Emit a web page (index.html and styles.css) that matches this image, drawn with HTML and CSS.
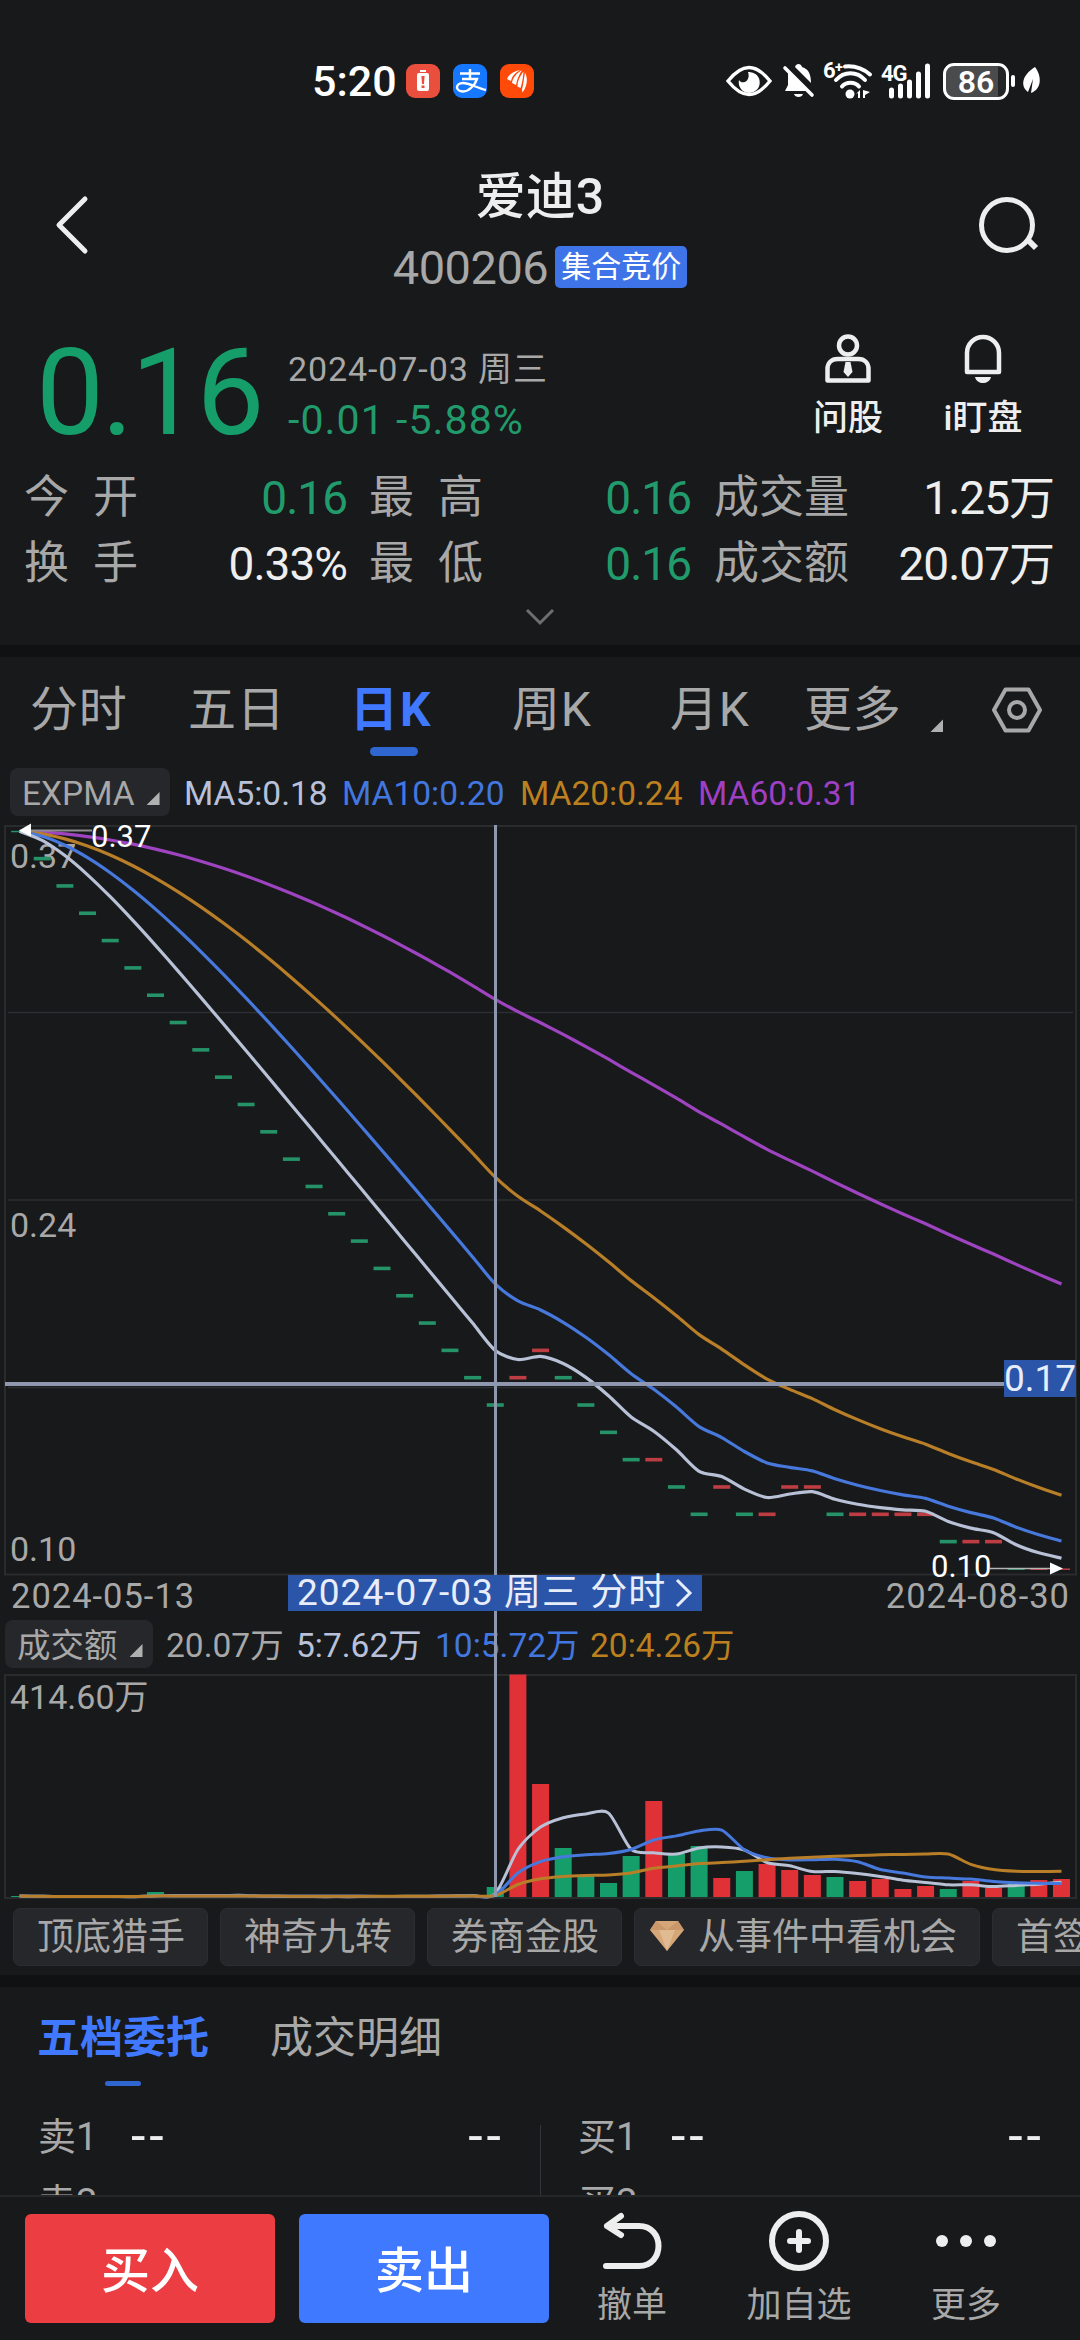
FILE: index.html
```html
<!DOCTYPE html>
<html lang="zh-CN">
<head>
    <meta charset="UTF-8">
    <title>爱迪3 400206</title>
    <link rel="stylesheet" href="styles.css">
</head>
<body>
    <div class="page">
        <div class="status-bar">
            <div class="status-left">
                <span class="clock">5:20</span>
                <svg class="app-icon" viewBox="0 0 34 34">
                    <rect width="34" height="34" rx="9" fill="#ea4e3c"/>
                    <rect x="11" y="9" width="12" height="18" rx="2" fill="#fff"/>
                    <rect x="14" y="6" width="6" height="2" fill="#fff"/>
                    <path d="M15.4 12h3.2l-.6 8h-2zM15.5 21.5h3v2.5h-3z" fill="#ea4e3c"/>
                </svg>
                <svg class="app-icon" viewBox="0 0 34 34">
                    <rect width="34" height="34" rx="9" fill="#1677ff"/>
                    <path d="M7 9.5h20M17 5v10M9 15h15c-2 6-8 12.500-14 12.500-8 0-8-8.500 0-8.500 6 0 14 5 23 7" fill="none" stroke="#fff" stroke-width="2.400"/>
                </svg>
                <svg class="app-icon" viewBox="0 0 34 34">
                    <rect width="34" height="34" rx="9" fill="#ff4a0a"/>
                    <path d="M7 15c2-5 7-8 13-9-5 3-8 6-9 11zM12 19c1-6 5-10 10-13-3 5-5 9-6 15zM17.500 22.500c0-6 3-11 6-15-.5 5-1 11-3 16.500zM22 25.500c1.500-6 2-11 3-17 3 6 2.500 13-2.500 20z" fill="#fff"/>
                </svg>
            </div>
            <div class="status-right">
                <svg class="eye" width="46" height="32" viewBox="0 0 46 32">
                    <path d="M2 16C10 6 16 2.500 23 2.500S36 6 44 16c-8 10-14 13.500-21 13.500S10 26 2 16z" fill="none" stroke="#fff" stroke-width="3.400"/>
                    <path d="M22 7a10.500 10.500 0 1 1-9 8c1.500 3 6 3 8 .5S23 10 22 7z" fill="#fff"/>
                </svg>
                <svg class="mute" width="32" height="36" viewBox="0 0 32 36">
                    <path d="M12 4c1-4 6-4 7 0 7 2 9 8 9 16L12 4zM5 9l20 19H2l3-6z" fill="#fff"/>
                    <path d="M2 5l27 27" stroke="#fff" stroke-width="3.600" stroke-linecap="round"/>
                    <path d="M11 31h9c-1 4-8 4-9 0z" fill="#fff"/>
                </svg>
                <svg class="wifi" width="50" height="38" viewBox="0 0 50 38">
                    <text x="0" y="16" class="tiny-label">6⁺</text>
                    <g fill="none" stroke="#fff" stroke-width="4" stroke-linecap="round">
                        <path d="M22 4.500c10-1 18 2 25 8"/>
                        <path d="M13 18c8-9 21-9 29 0"/>
                        <path d="M19 24.500c4-5 13-5 17 0"/>
                    </g>
                    <circle cx="27" cy="32" r="4.500" fill="#fff"/>
                    <path d="M33 32l4-4v8h-2v-5zM40 28v8h2v-3l5-3z" fill="#fff"/>
                </svg>
                <svg class="signal" width="51" height="38" viewBox="0 0 51 38">
                    <text x="0" y="19" class="tiny-label">4G</text>
                    <g stroke="#fff" stroke-width="5" stroke-linecap="round">
                        <path d="M10.500 28v6M19.500 24v10M28.500 20v14M37.500 12v22M46.500 4v30"/>
                    </g>
                </svg>
                <div class="battery">86</div>
                <div class="battery-nub"></div>
                <svg class="leaf" width="20" height="30" viewBox="0 0 20 30">
                    <path d="M13 1c7 9 7 22-4 26l2-14-5 13C-2 20 0 9 13 1z" fill="#fff"/>
                </svg>
            </div>
        </div>

        <header class="header">
            <svg class="back" width="36" height="60" viewBox="0 0 36 60">
                <path d="M31 4L5 30l26 26" fill="none" stroke="#eee" stroke-width="5" stroke-linecap="round" stroke-linejoin="round"/>
            </svg>
            <div class="title">
                <h1>爱迪3</h1>
                <div class="code"><span>400206</span><em>集合竞价</em></div>
            </div>
            <svg class="search" width="62" height="58" viewBox="0 0 62 58">
                <circle cx="29" cy="29" r="25.500" fill="none" stroke="#eee" stroke-width="5"/>
                <path d="M49 43l9 9" stroke="#eee" stroke-width="6"/>
            </svg>
        </header>

        <section class="quote">
            <div class="price">0.16</div>
            <div class="change">
                <div class="date">2024-07-03 周三</div>
                <div class="diff">-0.01 -5.88%</div>
            </div>
            <div class="tool ask">
                <svg width="48" height="50" viewBox="0 0 48 50" fill="none" stroke="#eee" stroke-width="4.500">
                    <circle cx="24" cy="11.500" r="9"/>
                    <path d="M3.500 46.500V35c0-6 4-10 10-10h21c6 0 10 4 10 10v11.500z" stroke-linejoin="round"/>
                    <path d="M21.500 28h5l2 10-4.500 5-4.500-5z" fill="#eee" stroke="none"/>
                </svg>
                <span>问股</span>
            </div>
            <div class="tool watch">
                <svg width="40" height="50" viewBox="0 0 40 50">
                    <path d="M4 38V19a16 16 0 0 1 32 0v19z" fill="none" stroke="#eee" stroke-width="4.500" stroke-linejoin="round"/>
                    <path d="M12 43h16c-2 8-14 8-16 0z" fill="#eee"/>
                </svg>
                <span>i盯盘</span>
            </div>
        </section>

        <section class="stats">
            <label class="wide">今开</label><b class="down">0.16</b>
            <label class="wide">最高</label><b class="down">0.16</b>
            <label>成交量</label><b>1.25万</b>
            <label class="wide">换手</label><b>0.33%</b>
            <label class="wide">最低</label><b class="down">0.16</b>
            <label>成交额</label><b>20.07万</b>
        </section>
        <div class="expand">
            <svg width="30" height="18" viewBox="0 0 30 18"><path d="M2 2l13 13L28 2" fill="none" stroke="#6d6e70" stroke-width="3"/></svg>
        </div>
        <div class="divider"></div>

        <nav class="periods">
            <span>分时</span>
            <span>五日</span>
            <span class="active">日K</span>
            <span>周K</span>
            <span>月K</span>
            <span class="more">更多<i class="corner"></i></span>
            <svg class="settings" width="52" height="48" viewBox="0 0 52 48" fill="none" stroke="#a8a8a8" stroke-width="4">
                <path d="M14.500 3.500h23L49 24 37.500 44.500h-23L3 24z" stroke-linejoin="round"/>
                <circle cx="26" cy="24" r="8"/>
            </svg>
        </nav>

        <div class="legend">
            <span class="select">EXPMA<i class="corner"></i></span>
            <span class="ma5">MA5:0.18</span>
            <span class="ma10">MA10:0.20</span>
            <span class="ma20">MA20:0.24</span>
            <span class="ma60">MA60:0.31</span>
        </div>

        <section class="charts">
            <svg id="priceChart" width="1080" height="750" viewBox="0 0 1080 750"></svg>
            <div class="date-axis">
                <span>2024-05-13</span>
                <span>2024-08-30</span>
            </div>
            <div class="legend volume-legend">
                <span class="select">成交额<i class="corner"></i></span>
                <span class="vol">20.07万</span>
                <span class="ma5">5:7.62万</span>
                <span class="ma10">10:5.72万</span>
                <span class="ma20">20:4.26万</span>
            </div>
            <svg id="volumeChart" width="1080" height="225" viewBox="0 0 1080 225"></svg>

            <div class="cross-h"></div>
            <div class="cross-v"></div>
            <div class="cross-price">0.17</div>
            <div class="cross-date">2024-07-03 周三 分时
                <svg width="18" height="32" viewBox="0 0 18 32"><path d="M2 3l13 13L2 29" fill="none" stroke="#e8edfa" stroke-width="3"/></svg>
            </div>
        </section>

        <div class="chips">
            <span>顶底猎手</span>
            <span>神奇九转</span>
            <span>券商金股</span>
            <span class="gem">
                <svg width="36" height="32" viewBox="0 0 36 32">
                    <path d="M7 1h22l6 9-17 21L1 10z" fill="#d5a677"/>
                    <path d="M1 10l6-9 11 9zM35 10L29 1 18 10z" fill="#c9976a"/>
                    <path d="M10 10h16l-8 21z" fill="#e0ba90"/>
                </svg>从事件中看机会
            </span>
            <span>首签</span>
        </div>
        <div class="divider"></div>

        <section class="orders">
            <div class="order-tabs">
                <span class="active">五档委托</span>
                <span>成交明细</span>
            </div>
            <div class="book">
                <div class="side">
                    <div class="level"><label>卖1</label><b>--</b><b>--</b></div>
                    <div class="level"><label>卖2</label></div>
                </div>
                <div class="side">
                    <div class="level"><label>买1</label><b>--</b><b>--</b></div>
                    <div class="level"><label>买2</label></div>
                </div>
            </div>
        </section>

        <footer class="actions">
            <button class="buy">买入</button>
            <button class="sell">卖出</button>
            <div class="action undo">
                <svg width="60" height="62" viewBox="0 0 60 62" fill="none" stroke="#eee" stroke-width="6" stroke-linecap="round" stroke-linejoin="round">
                    <path d="M19 6L5 16l14 9M5 16h32c26 0 26 40 0 40H4"/>
                </svg>
                <span>撤单</span>
            </div>
            <div class="action add">
                <svg width="62" height="62" viewBox="0 0 62 62" fill="none" stroke="#eee" stroke-width="6">
                    <circle cx="31" cy="31" r="27"/>
                    <path d="M31 22v18M22 31h18" stroke-linecap="round"/>
                </svg>
                <span>加自选</span>
            </div>
            <div class="action dots">
                <svg width="62" height="62" viewBox="0 0 62 62" fill="#eee">
                    <circle cx="7" cy="31" r="6"/><circle cx="31" cy="31" r="6"/><circle cx="55" cy="31" r="6"/>
                </svg>
                <span>更多</span>
            </div>
        </footer>
    </div>
    <script src="chart.js"></script>
</body>
</html>
```
FILE: styles.css
```css
* {
    margin: 0;
    padding: 0;
    box-sizing: border-box;
}

body {
    width: 1080px;
    height: 2340px;
    overflow: hidden;
    background: #17191b;
    color: #eee;
    font-family: Roboto, 'Noto Sans CJK SC', sans-serif;
}

svg {
    display: block;
    flex: none;
    overflow: visible;
}

.page {
    width: 1080px;
    height: 2340px;
    display: flex;
    flex-direction: column;
    overflow: hidden;
    white-space: nowrap;
}

.page > * {
    flex: none;
}

/* Status bar */
.status-bar {
    height: 130px;
    padding: 32px 38px 0 312px;
    display: flex;
    justify-content: space-between;
    color: #fff;
}

.status-left,
.status-right {
    height: 98px;
    display: flex;
    align-items: center;
}

.clock {
    width: 94px;
    font-size: 43px;
    font-weight: 500;
    line-height: 52px;
}

.app-icon {
    width: 34px;
    height: 34px;
    margin-right: 13px;
}

.eye {
    margin-right: 11px;
}

.mute {
    margin-right: 8px;
}

.wifi {
    margin-right: 8px;
}

.signal {
    margin-right: 11px;
}

.tiny-label {
    font-size: 22px;
    font-weight: 700;
    fill: #fff;
    letter-spacing: -1px;
}

.battery {
    width: 66px;
    height: 37px;
    border: 3px solid #fff;
    border-radius: 11px;
    background: linear-gradient(90deg, #4a4b4d 86%, #232527 86%);
    font-size: 32px;
    font-weight: 600;
    line-height: 32px;
    text-align: center;
}

.battery-nub {
    width: 4px;
    height: 12px;
    margin: 0 7px 0 2px;
    border-radius: 2px;
    background: #fff;
}

/* Header */
.header {
    height: 190px;
    padding: 35px 40px 0 54px;
    display: flex;
    justify-content: space-between;
}

.back {
    margin-top: 30px;
}

.search {
    margin-top: 31px;
}

.title {
    display: flex;
    flex-direction: column;
    align-items: center;
    margin-left: 12px;
}

.title h1 {
    font-size: 50px;
    font-weight: 500;
    line-height: 65px;
}

.code {
    height: 42px;
    margin-top: 16px;
    display: flex;
    align-items: center;
    gap: 7px;
    color: #a8a8a8;
    font-size: 47px;
    letter-spacing: -0.5px;
}

.code em {
    height: 42px;
    padding: 0 6px;
    border-radius: 5px;
    background: #3f74e8;
    color: #fff;
    font-size: 30px;
    font-style: normal;
    line-height: 41px;
    letter-spacing: 0;
}

/* Quote */
.quote {
    height: 145px;
    padding-left: 35px;
    display: flex;
}

.price {
    width: 253px;
    padding-left: 1px;
    color: #159e6a;
    font-size: 121px;
    line-height: 146px;
    letter-spacing: -2.5px;
}

.change {
    width: 518px;
    padding-top: 26px;
    color: #a8a8a8;
}

.date {
    height: 46px;
    font-size: 34px;
    line-height: 47px;
    letter-spacing: 0.9px;
}

.diff {
    height: 52px;
    color: #229b6c;
    font-size: 41px;
    line-height: 56px;
    letter-spacing: 1.1px;
}

.tool {
    padding-top: 14px;
    display: flex;
    flex-direction: column;
    align-items: center;
    font-size: 35px;
    font-weight: 500;
}

.tool.ask {
    width: 84px;
    margin-right: 43px;
}

.tool.watch {
    width: 100px;
}

.tool span {
    margin-top: 10px;
    line-height: 50px;
}

/* Stats */
.stats {
    height: 132px;
    padding: 0 26px 0 24px;
    display: grid;
    grid-template-columns: 114px 209px 22px 113px 209px 23px 135px 1fr;
    grid-template-rows: 66px 66px;
    align-items: center;
    font-size: 45px;
    line-height: 66px;
}

.stats label {
    color: #a8a8a8;
}

.stats .wide {
    display: flex;
    letter-spacing: 24px;
}

.stats b {
    font-weight: 400;
    font-size: 46px;
    line-height: 68px;
    letter-spacing: -1px;
    text-align: right;
}

.stats label:nth-of-type(3n + 1) {
    grid-column: 1;
}

.stats label:nth-of-type(3n + 2) {
    grid-column: 4;
}

.stats label:nth-of-type(3n) {
    grid-column: 7;
}

.down {
    color: #229b6c;
}

.expand {
    height: 48px;
    padding-top: 11px;
    display: flex;
    justify-content: center;
}

.divider {
    height: 12px;
    background: #101113;
}

/* Period tabs */
.periods {
    height: 105px;
    padding: 0 37px 0 30px;
    display: flex;
    align-items: flex-start;
    color: #a8a8a8;
    font-size: 48px;
    line-height: 106px;
}

.periods span {
    width: 158px;
    letter-spacing: 0.7px;
}

.periods .active {
    position: relative;
    width: 162px;
    margin-left: 4px;
    color: #4079ff;
    font-weight: 700;
    letter-spacing: 2px;
}

.periods .active::after {
    content: '';
    position: absolute;
    left: 20px;
    top: 90px;
    width: 48px;
    height: 9px;
    border-radius: 5px;
    background: #2f66d0;
}

.periods .more {
    width: 184px;
    margin-left: -24px;
}

.settings {
    margin: 29px 0 0 auto;
}

.corner {
    display: inline-block;
    width: 13px;
    height: 13px;
    background: #b0b0b0;
    clip-path: polygon(100% 0, 100% 100%, 0 100%);
}

.more .corner {
    margin-left: 29px;
    transform: translateY(6px);
}

/* Indicator legend */
.legend {
    height: 63px;
    padding: 6px 0 0 10px;
    display: flex;
    align-items: flex-start;
    font-size: 33.5px;
    line-height: 51px;
}

.select {
    width: 160px;
    height: 48px;
    margin-right: 14px;
    padding-left: 12px;
    border-radius: 8px;
    background: #25272a;
    color: #a8a8a8;
}

.select .corner {
    margin-left: 12px;
}

.ma5 {
    width: 158px;
    color: #b8c1d9;
}

.ma10 {
    width: 178px;
    color: #4377e0;
}

.ma20 {
    width: 178px;
    color: #bd801f;
}

.ma60 {
    color: #9f3fc4;
}

/* Charts */
.charts {
    position: relative;
    height: 1074px;
}

.date-axis {
    height: 39px;
    padding: 0 10px 0 11px;
    display: flex;
    justify-content: space-between;
    color: #a8a8a8;
    font-size: 34.5px;
    line-height: 42px;
    letter-spacing: 1px;
}

.volume-legend {
    height: 60px;
    padding: 6px 0 0 5px;
}

.volume-legend .select {
    width: 148px;
    margin-right: 13px;
}

.volume-legend .vol {
    width: 130px;
    color: #a8a8a8;
}

.volume-legend .ma5 {
    width: 139px;
}

.volume-legend .ma10 {
    width: 155px;
}

.axis-label {
    fill: #a8a8a8;
    font-size: 34px;
}

.mark-label {
    fill: #fff;
    font-size: 31px;
}

.cross-v {
    position: absolute;
    left: 494px;
    top: 0;
    width: 3px;
    height: 1072px;
    background: #8e97ad;
}

.cross-h {
    position: absolute;
    left: 5px;
    top: 557px;
    width: 1000px;
    height: 4px;
    background: #8e97ad;
}

.cross-price {
    position: absolute;
    left: 1004px;
    top: 535px;
    width: 72px;
    height: 37px;
    background: #2b55a9;
    color: #e8edfa;
    font-size: 37px;
    line-height: 38px;
    text-align: center;
}

.cross-date {
    position: absolute;
    left: 288px;
    top: 750px;
    width: 414px;
    height: 36px;
    padding-left: 9px;
    display: flex;
    align-items: center;
    gap: 9px;
    background: #2b55a9;
    color: #e8edfa;
    font-size: 37px;
    line-height: 38px;
    letter-spacing: 1px;
}

/* Feature chips */
.chips {
    height: 76px;
    padding: 9px 0 0 13px;
    display: flex;
    gap: 12px;
    overflow: hidden;
}

.chips span {
    flex: none;
    height: 58px;
    width: 195px;
    padding-left: 23px;
    border: 1px solid #2b2d30;
    border-radius: 7px;
    background: #25272a;
    color: #a8a8a8;
    font-size: 37px;
    line-height: 58px;
}

.chips .gem {
    width: 346px;
    padding-left: 14px;
    display: flex;
    gap: 13px;
}

.gem svg {
    margin-top: 11px;
}

/* Order book */
.orders {
    height: 208px;
    overflow: hidden;
}

.order-tabs {
    height: 117px;
    padding-left: 37px;
    display: flex;
    gap: 61px;
    color: #a8a8a8;
    font-size: 43px;
    line-height: 102px;
}

.order-tabs .active {
    position: relative;
    color: #4079ff;
    font-weight: 700;
}

.order-tabs .active::after {
    content: '';
    position: absolute;
    left: 68px;
    top: 94px;
    width: 36px;
    height: 5px;
    border-radius: 3px;
    background: #2f66d0;
}

.book {
    display: flex;
}

.side {
    width: 540px;
    padding: 0 38px;
    position: relative;
}

.side + .side::before {
    content: '';
    position: absolute;
    left: 0;
    top: 21px;
    width: 1px;
    height: 100px;
    background: #333538;
}

.level {
    height: 66px;
    display: flex;
    align-items: center;
    font-size: 38px;
    line-height: 70px;
}

.level label {
    width: 93px;
    color: #a8a8a8;
}

.level b {
    font-size: 52px;
    font-weight: 400;
    letter-spacing: 4px;
}

.level b:last-child {
    margin-left: auto;
    margin-right: -3px;
}

/* Bottom bar */
.actions {
    height: 145px;
    padding: 17px 0 0 25px;
    display: flex;
    border-top: 2px solid #242628;
}

.actions button {
    width: 250px;
    height: 109px;
    margin-right: 24px;
    padding-bottom: 4px;
    border: none;
    border-radius: 6px;
    background: #ec3d42;
    color: #fff;
    font-family: inherit;
    font-size: 49px;
    font-weight: 500;
}

.actions .sell {
    background: #3f79ff;
}

.action {
    margin-top: -4px;
    display: flex;
    flex-direction: column;
    align-items: center;
    color: #a8a8a8;
    font-size: 35px;
    line-height: 50px;
}

.action span {
    margin-top: 9px;
}

.undo {
    width: 70px;
    margin-left: 24px;
}

.add {
    width: 106px;
    margin-left: 79px;
}

.dots {
    width: 70px;
    margin-left: 79px;
}
```
FILE: chart.js
```javascript
const FIRST_X = 19.6;
const STEP = 22.65;
const BAR = 17;
const RED = '#e03137';
const GREEN = '#159e6a';

// closing prices in cents
const closes = [
    37, 36, 35, 34, 33, 32, 31, 30, 29, 28, 27, 26, 25, 24, 23, 22, 21, 20, 19, 18, 17, 16,
    17, 18, 17, 16, 15, 14, 14, 13, 12, 13, 12, 12, 13, 13, 12, 12, 12, 12, 12, 11, 11, 11, 10, 10, 10
];

// turnover, in plot units
const volumes = [
    1, .3, .3, .3, .3, .5, 5, 1, 1, .5, .5, .3, .3, .3, .5, .5, 1, 1, 1, 2, 2, 10,
    222.5, 113, 49, 21, 14, 41, 96, 43, 51, 19, 26, 33, 27, 22, 20, 16, 18, 8, 11, 8, 16, 9, 14, 17, 18
];

function x(i) {
    return FIRST_X + i * STEP;
}

function isUp(i) {
    return i > 21 && closes[i] >= closes[i - 1];
}

function ema(data, n) {
    const out = [data[0]];
    for (let i = 1; i < data.length; i++) {
        out.push(out[i - 1] + (data[i] - out[i - 1]) * 2 / (n + 1));
    }
    return out;
}

function sma(data, n) {
    return data.map((v, i) => {
        const part = data.slice(Math.max(0, i - n + 1), i + 1);
        return part.reduce((a, b) => a + b, 0) / part.length;
    });
}

function curve(values, y, color, width) {
    const p = values.map((v, i) => [x(i), y(v)]);
    const k = 0.13;
    let d = `M${p[0][0]} ${p[0][1]}`;
    for (let i = 1; i < p.length; i++) {
        const a = p[Math.max(0, i - 2)], b = p[i - 1], c = p[i], e = p[Math.min(p.length - 1, i + 1)];
        d += `C${b[0] + (c[0] - a[0]) * k} ${b[1] + (c[1] - a[1]) * k} ${c[0] - (e[0] - b[0]) * k} ${c[1] - (e[1] - b[1]) * k} ${c[0]} ${c[1]}`;
    }
    return `<path d="${d}" fill="none" stroke="${color}" stroke-width="${width}"/>`;
}

function drawPrice() {
    const y = p => 6.3 + (37 - p) * 27.32;
    let s = '<rect x="5" y="1" width="1071" height="748.5" fill="none" stroke="#292b2d" stroke-width="2"/>';
    [187.5, 375, 562.5].forEach(g => {
        s += `<path d="M8 ${g}H1073" stroke="#2c2e30" stroke-width="1.5"/>`;
    });
    s += '<text x="10" y="43" class="axis-label">0.37</text>';
    s += '<text x="10" y="412" class="axis-label">0.24</text>';
    s += '<text x="10" y="736" class="axis-label">0.10</text>';
    closes.forEach((c, i) => {
        const edge = i === 0 || c === 10;
        s += `<rect x="${x(i) - BAR / 2}" y="${y(c) - (edge ? .5 : 1.8)}" width="${BAR}" height="${edge ? 1.5 : 3.6}" fill="${isUp(i) ? '#bd3d42' : '#259268'}"/>`;
    });
    s += curve(ema(closes, 60), y, '#9f44c0', 3.2);
    s += curve(ema(closes, 20), y, '#b97e28', 3.2);
    s += curve(ema(closes, 10), y, '#4778dc', 3.2);
    s += curve(ema(closes, 5), y, '#b8c1d6', 3.2);
    // high and low markers
    s += '<path d="M28 5.5H92" stroke="#8d8d8d" stroke-width="2"/><path d="M19 5.500l12-7v13z" fill="#fff"/>';
    s += '<text x="91" y="22" class="mark-label">0.37</text>';
    s += '<path d="M990 743.5H1052" stroke="#b5b5b5" stroke-width="1.5"/><path d="M1063 743.500l-13-6v12z" fill="#fff"/>';
    s += '<text x="931" y="752" class="mark-label">0.10</text>';
    document.getElementById('priceChart').innerHTML = s;
}

function drawVolume() {
    const y = v => 223 - v;
    let s = '<rect x="5" y="1" width="1071" height="223" fill="none" stroke="#292b2d" stroke-width="2"/>';
    s += '<text x="10" y="35" class="axis-label">414.60万</text>';
    volumes.forEach((v, i) => {
        s += `<rect x="${x(i) - BAR / 2}" y="${y(v)}" width="${BAR}" height="${v}" fill="${isUp(i) ? RED : GREEN}"/>`;
    });
    s += curve(sma(volumes, 5), y, '#b8c1d6', 3);
    s += curve(sma(volumes, 10), y, '#4778dc', 3);
    s += curve(sma(volumes, 20), y, '#b97e28', 3);
    document.getElementById('volumeChart').innerHTML = s;
}

drawPrice();
drawVolume();
```
